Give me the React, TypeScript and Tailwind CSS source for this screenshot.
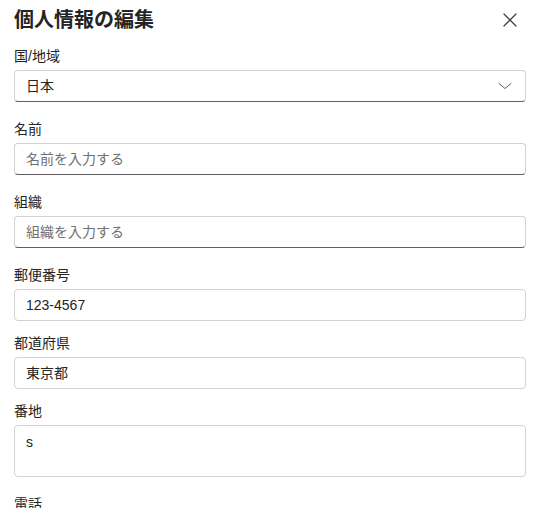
import React from "react";

const font = { fontFamily: '"Liberation Sans", "Noto Sans CJK JP", sans-serif' };

function Label({ children, className = "" }: { children: React.ReactNode; className?: string }) {
  return <div className={`text-[14px] leading-[20px] text-[#242424] mb-1 ${className}`}>{children}</div>;
}

function Input({ value, placeholder, strong }: { value?: string; placeholder?: string; strong?: boolean }) {
  return (
    <div
      className={`h-[32px] w-full rounded-[4px] border border-[#d1d1d1] ${strong ? "border-b-[#616161]" : ""} flex items-center px-[11px] text-[14px] bg-white`}
    >
      {value ? (
        <span className="text-[#242424]">{value}</span>
      ) : (
        <span className="text-[#707070]">{placeholder}</span>
      )}
    </div>
  );
}

export default function App() {
  return (
    <div className="w-[538px] h-[508px] overflow-hidden bg-white pl-[14px] pr-[12px] pt-[6px]" style={font}>
      <div className="flex items-center justify-between h-[28px]">
        <div className="text-[20px] leading-[28px] font-bold text-[#242424]">個人情報の編集</div>
        <svg width="16" height="16" viewBox="0 0 16 16" className="mr-[8px]">
          <path d="M2 2 L14 14 M14 2 L2 14" stroke="#424242" strokeWidth="1.3" strokeLinecap="round" />
        </svg>
      </div>

      <div className="mt-[12px]">
        <Label>国/地域</Label>
        <div className="h-[32px] w-full rounded-[4px] border border-[#d1d1d1] border-b-[#616161] flex items-center justify-between pl-[11px] pr-[12px] text-[14px] text-[#242424]">
          <span>日本</span>
          <svg width="16" height="16" viewBox="0 0 16 16">
            <path d="M2 5.5 L8 10.5 L14 5.5" stroke="#616161" strokeWidth="1" fill="none" strokeLinecap="round" strokeLinejoin="round" />
          </svg>
        </div>
      </div>

      <div className="mt-[17px]">
        <Label>名前</Label>
        <Input placeholder="名前を入力する" strong />
      </div>

      <div className="mt-[17px]">
        <Label>組織</Label>
        <Input placeholder="組織を入力する" strong />
      </div>

      <div className="mt-[17px]">
        <Label>郵便番号</Label>
        <Input value="123-4567" />
      </div>

      <div className="mt-[12px]">
        <Label>都道府県</Label>
        <Input value="東京都" />
      </div>

      <div className="mt-[12px]">
        <Label>番地</Label>
        <div className="h-[52px] w-full rounded-[4px] border border-[#d1d1d1] px-[11px] pt-[6px] text-[14px] leading-[20px] text-[#242424]">
          s
        </div>
      </div>

      <div className="mt-[17px]">
        <Label>電話</Label>
      </div>
    </div>
  );
}
